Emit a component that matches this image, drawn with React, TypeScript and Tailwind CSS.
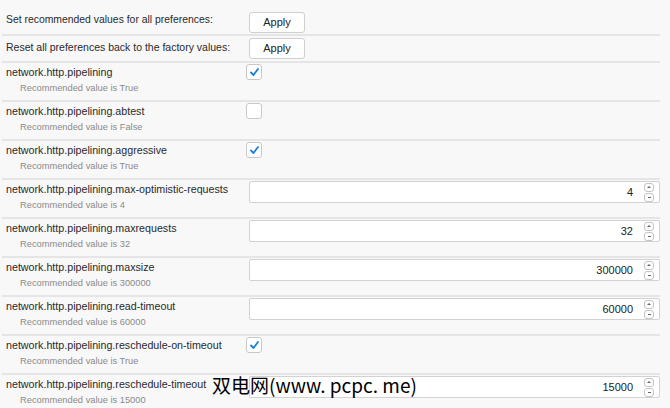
import React from "react";

type Pref = {
  name: string;
  kind: "bool" | "num";
  value: boolean | number;
  recommended: string;
};

const prefs: Pref[] = [
  { name: "network.http.pipelining", kind: "bool", value: true, recommended: "True" },
  { name: "network.http.pipelining.abtest", kind: "bool", value: false, recommended: "False" },
  { name: "network.http.pipelining.aggressive", kind: "bool", value: true, recommended: "True" },
  { name: "network.http.pipelining.max-optimistic-requests", kind: "num", value: 4, recommended: "4" },
  { name: "network.http.pipelining.maxrequests", kind: "num", value: 32, recommended: "32" },
  { name: "network.http.pipelining.maxsize", kind: "num", value: 300000, recommended: "300000" },
  { name: "network.http.pipelining.read-timeout", kind: "num", value: 60000, recommended: "60000" },
  { name: "network.http.pipelining.reschedule-on-timeout", kind: "bool", value: true, recommended: "True" },
  { name: "network.http.pipelining.reschedule-timeout", kind: "num", value: 15000, recommended: "15000" },
];

function Checkbox({ checked }: { checked: boolean }) {
  return (
    <div className="mt-[1px] flex h-[16px] w-[16px] items-center justify-center rounded-[3px] border border-[#c8c8c8] bg-white">
      {checked && (
        <svg width="11" height="10" viewBox="0 0 11 10">
          <path d="M2 5.5 L4.5 8 L9 2" fill="none" stroke="#1b7fe0" strokeWidth="1.8" strokeLinecap="round" strokeLinejoin="round" />
        </svg>
      )}
    </div>
  );
}

function NumberInput({ value }: { value: number }) {
  return (
    <div className="ml-[3px] mt-[1px] flex h-[22px] flex-1 items-center rounded-[2px] border border-[#d2d2d2] bg-white pr-[5px]">
      <span className="flex-1 pr-[11px] text-right text-[11px] text-[#222]">{value}</span>
      <div className="flex flex-col gap-[1px]">
        <div className="flex h-[9px] w-[10px] items-center justify-center rounded-[3px] border border-[#c4c4c4] bg-white">
          <div className="h-0 w-0 border-x-[2px] border-b-[2px] border-x-transparent border-b-[#666]" />
        </div>
        <div className="flex h-[9px] w-[10px] items-center justify-center rounded-[3px] border border-[#c4c4c4] bg-white">
          <div className="h-[1px] w-[3px] bg-[#666]" />
        </div>
      </div>
    </div>
  );
}

function ApplyButton({ className }: { className: string }) {
  return (
    <button
      className={`ml-[3px] flex h-[21px] w-[56px] items-center justify-center rounded-[3px] border border-[#cfcfcf] bg-white text-[11px] text-[#222] ${className}`}
    >
      Apply
    </button>
  );
}

function Line() {
  return <div className="h-[2px] bg-[#e5e5e5]" />;
}

export default function App() {
  return (
    <div
      className="relative h-[408px] w-[670px] overflow-hidden bg-[#f8f8f8] pl-[2px] pr-[10px] text-[#2a2a2a]"
      style={{ fontFamily: "'Liberation Sans', Arial, sans-serif" }}
    >
      <div className="flex h-[34px]">
        <div className="w-[244px] whitespace-nowrap pl-[4px] pt-[13px] text-[10.4px] leading-[14px]">
          Set recommended values for all preferences:
        </div>
        <ApplyButton className="mt-[12px]" />
      </div>
      <Line />
      <div className="flex h-[25px]">
        <div className="w-[244px] whitespace-nowrap pl-[4px] pt-[4px] text-[10.5px] leading-[14px]">
          Reset all preferences back to the factory values:
        </div>
        <ApplyButton className="mt-[2px]" />
      </div>
      <Line />

      {prefs.map((p) => (
        <div key={p.name}>
          <div className="flex h-[37px]">
            <div className="w-[244px] shrink-0 whitespace-nowrap pl-[4px]">
              <div className="pt-[2px] text-[10.7px] leading-[14px]">{p.name}</div>
              <div className="pl-[14px] pt-[2px] text-[9.3px] leading-[14px] text-[#8a8a8a]">
                Recommended value is {p.recommended}
              </div>
            </div>
            {p.kind === "bool" ? (
              <Checkbox checked={p.value as boolean} />
            ) : (
              <NumberInput value={p.value as number} />
            )}
          </div>
          <Line />
        </div>
      ))}

      {/* watermark */}
      <div
        className="absolute left-[212px] top-[373px] text-[19px] leading-[24px] text-black"
        style={{ fontFamily: "'Noto Sans CJK SC', sans-serif" }}
      >
        双电网(www. pcpc. me)
      </div>
    </div>
  );
}
